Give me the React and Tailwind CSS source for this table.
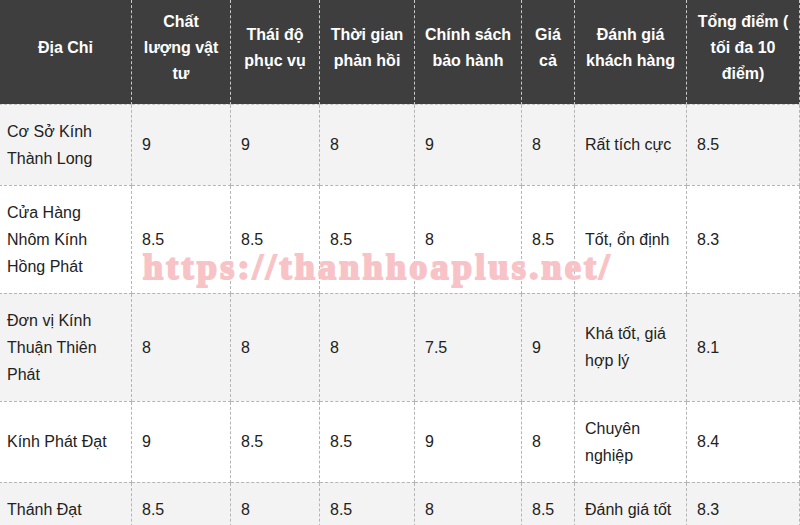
import React from 'react';

const headers = [
  'Địa Chỉ',
  'Chất lượng vật tư',
  'Thái độ phục vụ',
  'Thời gian phản hồi',
  'Chính sách bảo hành',
  'Giá cả',
  'Đánh giá khách hàng',
  'Tổng điểm ( tối đa 10 điểm)',
];

const widths = ['w-[132px]', 'w-[99px]', 'w-[89px]', 'w-[95px]', 'w-[107px]', 'w-[53px]', 'w-[112px]', 'w-[113px]'];

const rows = [
  ['Cơ Sở Kính Thành Long', '9', '9', '8', '9', '8', 'Rất tích cực', '8.5'],
  ['Cửa Hàng Nhôm Kính Hồng Phát', '8.5', '8.5', '8.5', '8', '8.5', 'Tốt, ổn định', '8.3'],
  ['Đơn vị Kính Thuận Thiên Phát', '8', '8', '8', '7.5', '9', 'Khá tốt, giá hợp lý', '8.1'],
  ['Kính Phát Đạt', '9', '8.5', '8.5', '9', '8', 'Chuyên nghiệp', '8.4'],
  ['Thánh Đạt', '8.5', '8', '8.5', '8', '8.5', 'Đánh giá tốt', '8.3'],
];

const App = () => {
  return (
    <div className="relative w-[800px] h-[525px] overflow-hidden bg-white font-['Liberation_Sans',Arial,sans-serif] text-[16px] leading-[27px] text-[#222]">
      <table className="table-fixed border-collapse w-[800px] -ml-[1px]">
        <colgroup>
          {widths.map((w, i) => (
            <col key={i} className={w} />
          ))}
        </colgroup>
        <thead>
          <tr className="bg-[#3e3e3e] text-white">
            {headers.map((h, i) => (
              <th
                key={i}
                className="border border-dashed border-[#c8c8c8] border-t-0 px-[8px] pt-[8px] pb-[16px] font-bold text-center align-middle leading-[26px] h-[104px]"
              >
                {h}
              </th>
            ))}
          </tr>
        </thead>
        <tbody>
          {rows.map((row, r) => (
            <tr key={r} className={r % 2 === 0 ? 'bg-[#f3f3f3]' : 'bg-white'}>
              {row.map((cell, c) => (
                <td
                  key={c}
                  className={`border border-dashed border-[#b5b5b5] py-[13px] align-middle text-left ${c === 0 ? 'pl-[7px] pr-[8px]' : 'pl-[10px] pr-[8px]'}`}
                >
                  {cell}
                </td>
              ))}
            </tr>
          ))}
        </tbody>
      </table>

      {/* watermark */}
      <div className="absolute left-[143px] top-[249px] font-['Liberation_Serif','Times_New_Roman',serif] font-bold text-[36px] leading-none tracking-[3.3px] text-[#f8c3c6] [-webkit-text-stroke:2px_#f8c3c6] pointer-events-none whitespace-nowrap">
        https://thanhhoaplus.net/
      </div>
    </div>
  );
};

export default App;
